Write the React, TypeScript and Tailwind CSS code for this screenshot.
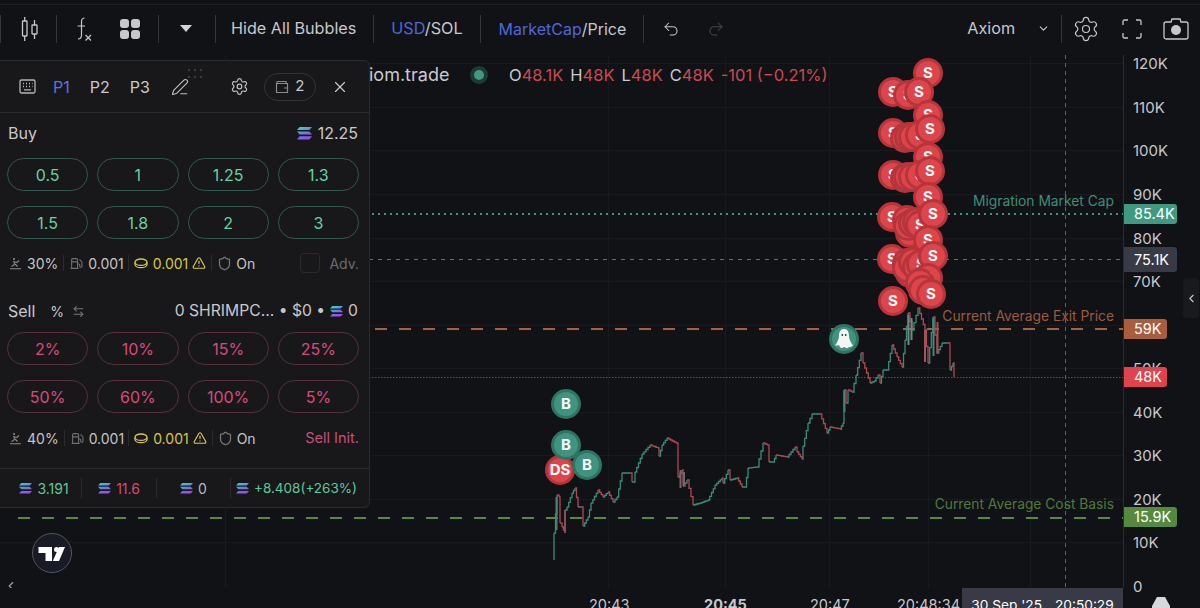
import { useId } from 'react';
import { ArrowLeftRight, ChevronDown, ChevronLeft, Fuel, PenLine, Redo2, Settings, Shield, TriangleAlert, Undo2, X } from 'lucide-react';

const TOP = 55; // chart canvas starts here, bubbles are listed in page coordinates

const upColor = '#3d8c7b';
const downColor = '#ad4a52';

// rough price path, page coordinates
const pricePath: number[][] = [
  [554, 560], [554, 533], [557, 495], [559, 497], [560, 523], [562, 527], [565, 533], [565, 510], [567, 507], [572, 493], [575, 488], [578, 507], [582, 507], [583, 526], [588, 517], [591, 503], [598, 490], [603, 497], [608, 492], [613, 502], [617, 497], [622, 473], [630, 473], [632, 482], [634, 482], [635, 472], [642, 454], [650, 445], [658, 448], [659, 456], [662, 445], [667, 438], [676, 443], [678, 477], [682, 470], [683, 486], [687, 480], [693, 505], [700, 503], [708, 500], [715, 485], [722, 478], [723, 483], [728, 470], [730, 480], [737, 478], [742, 487], [745, 487], [748, 468], [757, 467], [763, 443], [767, 445], [769, 462], [773, 462], [776, 455], [787, 457], [795, 447], [797, 452], [802, 459], [803, 446], [808, 423], [812, 414], [820, 414], [827, 433], [830, 427], [840, 429], [843, 423], [844, 390], [846, 403], [848, 390], [852, 392], [856, 375], [861, 353], [863, 363], [870, 383], [874, 381], [878, 375], [880, 383], [883, 370], [887, 370], [892, 345], [897, 357], [902, 367], [905, 340], [908, 313], [912, 330], [918, 308], [925, 330], [928, 363], [933, 317], [937, 353], [942, 343], [948, 343], [950, 370], [953, 363], [954, 377],
];

// thicker candle bodies where the chart jumps: x, top, bottom, colour
const bodies: [number, number, number, string][] = [
  [556.5, 497, 530, '#4f7f74'],
  [565, 510, 533, '#8a4f55'],
  [680.5, 470, 488, '#6d6a6c'],
  [684, 472, 486, '#6d6a6c'],
  [844.5, 390, 412, '#4f7f74'],
  [908.5, 315, 345, '#6f8a84'],
  [911.5, 318, 340, '#6f8a84'],
  [925, 330, 362, '#a0555b'],
  [933.5, 318, 356, '#3d8c7b'],
  [937.5, 322, 354, '#ad4a52'],
];

function buildCandles() {
  let up = '';
  let down = '';
  for (let i = 1; i < pricePath.length; i++) {
    const [x1, y1] = pricePath[i - 1];
    const [x2, y2] = pricePath[i];
    const steps = Math.max(1, Math.ceil((x2 - x1) / 2));
    let d = `M${x1} ${y1}`;
    for (let s = 1; s <= steps; s++) {
      const x = x1 + ((x2 - x1) * s) / steps;
      const y = y1 + ((y2 - y1) * s) / steps;
      d += `H${x.toFixed(1)}V${y.toFixed(1)}`;
    }
    if (y2 <= y1) up += d;
    else down += d;
  }
  return { up, down };
}

const sellBubbles: number[][] = [
  [928, 73], [893, 92], [908, 95], [919, 92], [928, 115], [893, 133], [905, 138], [909, 137], [913, 137], [920, 135], [930, 129],
  [928, 157], [893, 175], [905, 178], [908, 177], [913, 177], [920, 175], [930, 171],
  [928, 197], [892, 217], [907, 220], [910, 233], [908, 226], [913, 223], [917, 222], [920, 225], [933, 214],
  [928, 240], [892, 259], [907, 263], [910, 273], [907, 268], [913, 262], [917, 267], [921, 264], [933, 256],
  [928, 278], [893, 301], [920, 283], [923, 290], [931, 294],
];

const priceTicks: [string, number][] = [
  ['120K', 63], ['110K', 107], ['100K', 150], ['90K', 194], ['80K', 238], ['70K', 281], ['50K', 368], ['40K', 412], ['30K', 455], ['20K', 499], ['10K', 542], ['0', 586],
];

function Sep({ className = '' }: { className?: string }) {
  return <div className={`h-7 w-px bg-[#33353b] ${className}`} />;
}

function Bubble({ x, y, label, green }: { x: number; y: number; label?: string; green?: boolean }) {
  return (
    <div
      className={`absolute flex h-[30px] w-[30px] -translate-x-1/2 -translate-y-1/2 items-center justify-center rounded-full border-[3px] font-bold text-white ${green ? 'border-[#2f7362] bg-[#3f9480]' : 'border-[#b5353b] bg-[#de454b]'} text-[15px]`}
      style={{ left: x, top: y - TOP }}
    >
      {label ?? 'S'}
    </div>
  );
}

function Ghost() {
  return (
    <svg width="20" height="22" viewBox="0 0 20 22">
      <path d="M10 1C6 1 5 4.500 5 8C5 11 3.500 14 1 17.500C3 17.500 4 17.500 5 17C5.500 19 6.500 20 8 20C9 20 9.500 19 10.500 19C12 20.500 14 20.500 15 19C16.500 19 18 18.500 19 17.500C16.500 14 15 11 15 8C15 4.500 14 1 10 1Z" fill="#f4f5f4" />
      <circle cx="8.300" cy="7" r="0.900" fill="#333" />
      <circle cx="11.700" cy="7" r="0.900" fill="#333" />
    </svg>
  );
}

function Sol({ size = 14 }: { size?: number }) {
  const id = useId();
  return (
    <svg width={size} height={size} viewBox="0 0 14 14" className="shrink-0">
      <defs>
        <linearGradient id={id} x1="0" y1="0" x2="0.500" y2="1">
          <stop offset="0" stopColor="#3fdcb4" />
          <stop offset="0.550" stopColor="#5a88dc" />
          <stop offset="1" stopColor="#a648f0" />
        </linearGradient>
      </defs>
      <path d="M2.500 1H14L11.500 3.700H0ZM0 5.200H11.500L14 7.900H2.500ZM2.500 9.600H14L11.500 12.500H0Z" fill={`url(#${id})`} />
    </svg>
  );
}

function Slide() {
  return (
    <svg width="13" height="13" viewBox="0 0 13 13" fill="none" stroke="#8c8c8e" strokeWidth="1.100" className="shrink-0">
      <circle cx="5" cy="2" r="1" fill="#8c8c8e" stroke="none" />
      <path d="M4 4.500L8 5.500L10 3.500M5.500 5L5 8L2.500 9.500M6 7L8.500 9.500M1 11.800H12" />
    </svg>
  );
}

function Coin() {
  return (
    <svg width="14" height="11" viewBox="0 0 14 11" fill="none" stroke="#d8c64e" strokeWidth="1.300" className="shrink-0">
      <ellipse cx="7" cy="4.200" rx="6" ry="3.200" />
      <path d="M1 4.500V6.500C1 8.300 3.700 9.700 7 9.700C10.300 9.700 13 8.300 13 6.500V4.500" />
    </svg>
  );
}

function Stats({ slip, right }: { slip: string; right: React.ReactNode }) {
  return (
    <div className="flex h-5 items-center pl-[9px] pr-[10px] text-[14px] text-[#c4c4c6]">
      <Slide />
      <span className="ml-[5px]">{slip}</span>
      <div className="ml-[5px] h-4 w-px bg-[#2b2b2d]" />
      <Fuel size={13} className="ml-[6px] text-[#707074]" />
      <span className="ml-[5px]">0.001</span>
      <div className="ml-[4px] h-4 w-px bg-[#2b2b2d]" />
      <span className="ml-[5px]"><Coin /></span>
      <span className="ml-[5px] text-[#d8c64e]">0.001</span>
      <TriangleAlert size={14} className="ml-[4px] text-[#d8c64e]" />
      <div className="ml-[5px] h-4 w-px bg-[#2b2b2d]" />
      <Shield size={15} className="ml-[5px] text-[#77777a]" />
      <span className="ml-[4px]">On</span>
      <div className="ml-auto flex items-center">{right}</div>
    </div>
  );
}

function AmountGrid({ items, sell }: { items: string[]; sell?: boolean }) {
  return (
    <div className="grid grid-cols-4 gap-x-[9px] gap-y-[15px] pl-[7px] pr-[10px]">
      {items.map((item) => (
        <div
          key={item}
          className={`flex h-[33px] items-center justify-center rounded-full border text-[16px] ${sell ? 'border-[#56303d] text-[#d94a7c]' : 'border-[#2f5a50] text-[#62d3a4]'}`}
        >
          {item}
        </div>
      ))}
    </div>
  );
}

function TradePanel() {
  return (
    <div className="absolute left-0 top-[5px] flex h-[448px] w-[370px] flex-col rounded-r-md border border-l-0 border-[#2a2a2c] bg-[#18181a]">
      <div className="relative flex h-[52px] shrink-0 items-center border-b border-[#2a2a2c] text-[16px] text-[#c8c8ca]">
        <svg width="17" height="17" viewBox="0 0 17 17" fill="none" stroke="#b4b4b6" strokeWidth="1.300" className="ml-[19px]">
          <rect x="1" y="2" width="15" height="13" rx="1.500" />
          <path d="M4 5.500H5M7 5.500H8M10 5.500H11M13 5.500H13.500M4 8.500H5M7 8.500H8M10 8.500H11M13 8.500H13.500M5 11.800H12" />
        </svg>
        <span className="ml-[17px] text-[#5a72e6]">P1</span>
        <span className="ml-[20px]">P2</span>
        <span className="ml-[20px]">P3</span>
        <PenLine size={18} strokeWidth={1.500} className="ml-[21px] text-[#c0c0c2]" />
        <div className="absolute left-[188px] top-[8px] grid grid-cols-3 gap-x-[4px] gap-y-[5px]">
          {[0, 1, 2, 3, 4, 5].map((i) => (
            <div key={i} className="h-[2px] w-[2px] rounded-full bg-[#47474a]" />
          ))}
        </div>
        <Settings size={19} strokeWidth={1.500} className="ml-[41px] text-[#c0c0c2]" />
        <div className="ml-[15px] flex h-[28px] w-[52px] items-center justify-center gap-[6px] rounded-full border border-[#333335] text-[15px]">
          <svg width="14" height="14" viewBox="0 0 14 14" fill="none" stroke="#8a8a8c" strokeWidth="1.200">
            <path d="M2 3.500V2.500C2 1.800 2.500 1.500 3 1.500H11V3.500M1.500 3.500H12.500V12.500H1.500ZM9 8H12.500" />
          </svg>
          2
        </div>
        <X size={18} strokeWidth={1.500} className="ml-[15px] text-[#d0d0d2]" />
      </div>

      <div className="flex h-[40px] shrink-0 items-center justify-between pl-2 pr-[11px] text-[16px] text-[#c8c8ca]">
        <span>Buy</span>
        <span className="flex items-center gap-[6px]"><Sol size={15} />12.25</span>
      </div>
      <div className="mt-[5px]">
        <AmountGrid items={['0.5', '1', '1.25', '1.3', '1.5', '1.8', '2', '3']} />
      </div>
      <div className="mt-[14px]">
        <Stats
          slip="30%"
          right={
            <>
              <div className="h-[20px] w-[20px] rounded-[4px] border border-[#2a2a2c]" />
              <span className="ml-[9px] text-[14px] text-[#6c6c6f]">Adv.</span>
            </>
          }
        />
      </div>

      <div className="mt-[28px] flex h-[20px] shrink-0 items-center pl-2 pr-[11px] text-[16px] text-[#c8c8ca]">
        <span>Sell</span>
        <span className="ml-[15px] text-[14px]">%</span>
        <ArrowLeftRight size={13} className="ml-[8px] text-[#77777a]" />
        <span className="ml-auto flex items-center gap-[5px] text-[15.7px]">
          0 SHRIMPC... • $0 • <Sol size={13} /> 0
        </span>
      </div>
      <div className="mt-[11px]">
        <AmountGrid sell items={['2%', '10%', '15%', '25%', '50%', '60%', '100%', '5%']} />
      </div>
      <div className="mt-[15px]">
        <Stats slip="40%" right={<span className="text-[14.5px] text-[#c64f7c]">Sell Init.</span>} />
      </div>

      <div className="mt-auto flex h-[39px] shrink-0 items-center border-t border-[#2a2a2c] text-[14px]">
        <div className="flex h-5 w-[82px] items-center justify-center gap-[5px] border-r border-[#2a2a2c] pl-[7px] text-[#5fc89a]"><Sol size={13} />3.191</div>
        <div className="flex h-5 w-[75px] items-center justify-center gap-[5px] border-r border-[#2a2a2c] text-[#d94a6c]"><Sol size={13} />11.6</div>
        <div className="flex h-5 w-[74px] items-center justify-center gap-[5px] border-r border-[#2a2a2c] text-[#b8b8ba]"><Sol size={13} />0</div>
        <div className="flex h-5 flex-1 items-center gap-[5px] pl-[5px] text-[13.5px] text-[#5fc89a]"><Sol size={13} />+8.408(+263%)</div>
      </div>
    </div>
  );
}

function Toolbar() {
  return (
    <div className="flex h-[55px] shrink-0 flex-col">
      <div className="mt-1 h-px bg-[#1d1f24]" />
      <div className="flex flex-1 items-center pb-[3px] text-[16.2px] text-[#c6c8cc]">
        <div className="h-7 w-px bg-[#33353b]" />
        <svg width="18" height="28" viewBox="0 0 18 28" fill="none" stroke="#c6c8cc" strokeWidth="1.300" className="ml-[20px]">
          <rect x="1.500" y="6" width="4.500" height="15" rx="0.500" />
          <path d="M3.700 2V6M3.700 21V26M13.500 5V10M13.500 19V24" />
          <rect x="11" y="10" width="5" height="9" rx="0.500" />
        </svg>
        <Sep className="ml-[17px]" />
        <svg width="17" height="26" viewBox="0 0 17 26" fill="none" stroke="#c6c8cc" strokeWidth="1.200" className="ml-[18px]">
          <path d="M9.500 2C7 2 6.500 4 6.500 6V19C6.500 21.500 5.500 23 3 23M2.500 10H10M10.500 19L16 24.500M16 19L10.500 24.500" />
        </svg>
        <div className="ml-[28px] grid grid-cols-2 gap-[2px]">
          {[0, 1, 2, 3].map((i) => (
            <div key={i} className="h-[9px] w-[9px] rounded-[3px] bg-[#c6c8cc]" />
          ))}
        </div>
        <Sep className="ml-[18px]" />
        <div className="ml-[21px] h-0 w-0 border-x-[6px] border-t-[7px] border-x-transparent border-t-[#d2d4d8]" />
        <Sep className="ml-[23px]" />
        <span className="ml-[15px]">Hide All Bubbles</span>
        <Sep className="ml-[17px]" />
        <span className="ml-[17px]"><span className="text-[#4f67d8]">USD</span>/SOL</span>
        <Sep className="ml-[17px]" />
        <span className="ml-[18px] text-[16px]"><span className="text-[#4f67d8]">MarketCap</span>/Price</span>
        <Sep className="ml-[17px]" />
        <Undo2 size={18} strokeWidth={1.400} className="ml-[18px]" />
        <Redo2 size={18} strokeWidth={1.400} className="ml-[27px] text-[#46484e]" />
        <span className="ml-[242px]">Axiom</span>
        <ChevronDown size={13} className="ml-[22px]" />
        <Sep className="ml-[11px]" />
        <Settings size={28} strokeWidth={1} className="ml-[10px]" />
        <svg width="20" height="20" viewBox="0 0 20 20" fill="none" stroke="#c6c8cc" strokeWidth="1.300" className="ml-[22px]">
          <path d="M1 6V2.500C1 1.500 1.500 1 2.500 1H6M14 1H17.500C18.500 1 19 1.500 19 2.500V6M19 14V17.500C19 18.500 18.500 19 17.500 19H14M6 19H2.500C1.500 19 1 18.500 1 17.500V14" />
        </svg>
        <svg width="26" height="24" viewBox="0 0 26 24" fill="none" stroke="#c6c8cc" strokeWidth="1.300" className="ml-[21px]">
          <path d="M3 5H8L9 2H17L18 5H23C24 5 25 6 25 7V20C25 21 24 22 23 22H3C2 22 1 21 1 20V7C1 6 2 5 3 5Z" />
          <circle cx="13" cy="13" r="5" fill="#c6c8cc" stroke="none" />
        </svg>
      </div>
    </div>
  );
}

function ChartLines() {
  const { up, down } = buildCandles();
  const hLines = [63, 107, 150, 194, 238, 281, 325, 368, 412, 455, 499, 542];
  const vLines = [225, 608, 725, 829, 928, 1030];
  return (
    <svg className="absolute inset-0" width="1123" height="533" viewBox={`0 ${TOP} 1123 533`} fill="none">
      {hLines.map((y) => <path key={y} d={`M0 ${y}.5H1123`} stroke="#181a1f" />)}
      {vLines.map((x) => <path key={x} d={`M${x}.5 ${TOP}V588`} stroke="#181a1f" />)}
      <path d="M1065.500 55V588" stroke="#5f6268" strokeDasharray="4 4" />
      <path d="M0 214H1123" stroke="#3f9480" strokeWidth="2" strokeDasharray="2 4" />
      <path d="M0 259.500H1123" stroke="#6a6d72" strokeDasharray="4 5" />
      <path d="M375 329H1123" stroke="#a85f42" strokeWidth="2" strokeDasharray="12 12" />
      <path d="M0 377.500H1123" stroke="#8a3c40" strokeDasharray="1.500 1.500" />
      <path d="M18 518H1123" stroke="#5a8a3e" strokeWidth="2" strokeDasharray="12 12" />
      <path d={up} stroke={upColor} strokeWidth="1.300" />
      <path d={down} stroke={downColor} strokeWidth="1.300" />
      {bodies.map(([x, y1, y2, color]) => <path key={`${x}-${y1}`} d={`M${x} ${y1}V${y2}`} stroke={color} strokeWidth="2" />)}
    </svg>
  );
}

function TvLogo() {
  return (
    <div className="absolute left-[32px] top-[478px] flex h-10 w-10 items-center justify-center rounded-full border border-[#53555c] bg-[#181a25]">
      <svg width="40" height="40" viewBox="0 0 40 40" fill="#fff" className="shrink-0">
        <path d="M6.500 14H20V28H13.500V20H6.500Z" />
        <circle cx="24.500" cy="16.500" r="2.500" />
        <path d="M27 14H33L27 28H20.800Z" />
      </svg>
    </div>
  );
}

function PriceTag({ y, h, w, color, text }: { y: number; h: string; w: string; color: string; text: string }) {
  return (
    <div className={`absolute left-0 flex items-center rounded-r-[3px] pl-[10px] text-[14.5px] text-white ${h} ${w} ${color}`} style={{ top: y - TOP }}>
      {text}
    </div>
  );
}

export default function App() {
  return (
    <div className="relative flex h-[608px] w-[1200px] flex-col overflow-hidden bg-[#101216] [font-family:Inter,sans-serif]">
      <Toolbar />
      <div className="flex min-h-0 flex-1">
        <div className="relative w-[1123px] shrink-0 overflow-hidden">
          <ChartLines />

          <div className="absolute left-[369px] top-[8px] flex h-6 items-center text-[18px] leading-none text-[#c8cacf]">iom.trade</div>
          <div className="absolute left-[470px] top-[11px] flex h-[18px] w-[18px] items-center justify-center rounded-full bg-[#1f3a35]">
            <div className="h-[10px] w-[10px] rounded-full bg-[#3f9a84]" />
          </div>
          <div className="absolute left-[509px] top-[8px] flex h-6 items-center gap-[7px] whitespace-nowrap text-[16.5px] text-[#cc4a50]">
            <span><span className="text-[#c8cacf]">O</span>48.1K</span>
            <span><span className="text-[#c8cacf]">H</span>48K</span>
            <span><span className="text-[#c8cacf]">L</span>48K</span>
            <span><span className="text-[#c8cacf]">C</span>48K</span>
            <span>-101 (−0.21%)</span>
          </div>

          <div className="absolute right-[9px] top-[136px] text-[13.8px] text-[#3f8e78]">Migration Market Cap</div>
          <div className="absolute right-[9px] top-[251px] text-[13.8px] text-[#9c5a3f]">Current Average Exit Price</div>
          <div className="absolute right-[9px] top-[439px] text-[13.8px] text-[#4f7a3a]">Current Average Cost Basis</div>

          {sellBubbles.map(([x, y], i) => <Bubble key={i} x={x} y={y} />)}
          <Bubble x={560} y={470} label="DS" />
          <Bubble x={566} y={404} label="B" green />
          <Bubble x={566} y={445} label="B" green />
          <Bubble x={587} y={465} label="B" green />
          <div className="absolute left-[829px] top-[269px] flex h-[30px] w-[30px] items-center justify-center rounded-full border-[3px] border-[#2f7362] bg-[#3f9480]">
            <Ghost />
          </div>

          <TvLogo />
          <ChevronLeft size={14} className="absolute left-[4px] top-[524px] text-[#a0a2a8]" />
          <TradePanel />
        </div>

        <div className="relative flex-1 border-l border-[#2a2c31] text-[15px] text-[#c6c8cc]">
          {priceTicks.map(([label, y]) => (
            <div key={label} className="absolute left-[9px] leading-[20px]" style={{ top: y - TOP - 9 }}>{label}</div>
          ))}
          <PriceTag y={204} h="h-5" w="w-[53px]" color="bg-[#3f9a82]" text="85.4K" />
          <PriceTag y={247} h="h-[25px]" w="w-[53px]" color="bg-[#383a46]" text="75.1K" />
          <PriceTag y={319} h="h-5" w="w-[43px]" color="bg-[#a85d3e]" text="59K" />
          <PriceTag y={367} h="h-5" w="w-[43px]" color="bg-[#e0424e]" text="48K" />
          <PriceTag y={507} h="h-5" w="w-[53px]" color="bg-[#558a3e]" text="15.9K" />
          <div className="absolute left-[59px] top-[223px] flex h-10 w-[16px] items-center justify-center rounded-[4px] bg-[#191a1e]">
            <ChevronLeft size={13} className="text-[#c6c8cc]" />
          </div>
        </div>
      </div>

      <div className="relative h-5 shrink-0 overflow-hidden text-[14.5px] leading-[20px] text-[#c6c8cc]">
        <span className="absolute left-[589px] top-[7px]">20:43</span>
        <span className="absolute left-[704px] top-[7px] font-bold">20:45</span>
        <span className="absolute left-[810px] top-[7px]">20:47</span>
        <span className="absolute left-[897px] top-[7px]">20:48:34</span>
        <div className="absolute left-[962px] top-0 flex h-5 w-[161px] items-start justify-center gap-[13px] bg-[#383a46] pt-[7px] text-[13.7px] text-white">
          <span>30 Sep '25</span>
          <span>20:50:29</span>
        </div>
        <svg width="18" height="12" viewBox="0 0 18 12" className="absolute left-[1152px] top-[9px]">
          <path d="M5 0H13L18 9V12H0V9Z" fill="#d6d8dc" />
        </svg>
      </div>
    </div>
  );
}
